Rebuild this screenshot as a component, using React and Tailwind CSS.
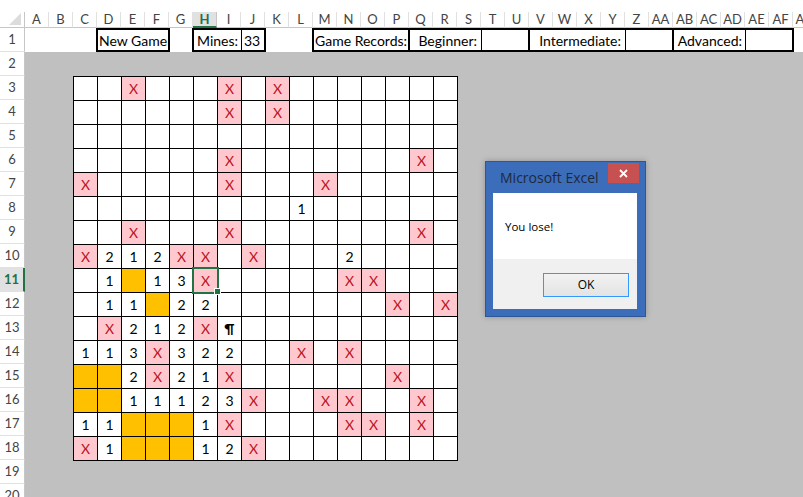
import React from 'react';

const cols = [
  'A', 'B', 'C', 'D', 'E', 'F', 'G', 'H', 'I', 'J', 'K', 'L', 'M', 'N', 'O', 'P',
  'Q', 'R', 'S', 'T', 'U', 'V', 'W', 'X', 'Y', 'Z', 'AA', 'AB', 'AC', 'AD', 'AE', 'AF', 'AG',
];

// '.' empty, X mine, Y revealed blank, P pilcrow, digits = counts
const board = [
  '..X...X.X.......',
  '......X.X.......',
  '................',
  '......X.......X.',
  'X.....X...X.....',
  '.........1......',
  '..X...X.......X.',
  'X212XX.X...2....',
  '.1Y13X.....XX...',
  '.11Y22.......X.X',
  '.X212XP.........',
  '113X322..X.X....',
  'YY2X21X......X..',
  'YY11123X..XX..X.',
  '11YYY1X....XX.X.',
  'X1YYY12X........',
];

function Cell({ v, selected }) {
  let bg = 'bg-white';
  if (v === 'X') bg = 'bg-[#ffc7ce]';
  if (v === 'Y') bg = 'bg-[#ffc000]';

  return (
    <div
      className={`${bg} ${selected ? 'z-10' : ''} relative w-[24px] h-[24px] border-r border-b border-black flex items-center justify-center`}
    >
      {v === 'X' && <span className="text-[#c0101c] text-[14px]">X</span>}
      {v === 'P' && <span className="font-bold text-[14px]">¶</span>}
      {/[0-9]/.test(v) && <span className="text-black text-[14px]">{v}</span>}
      {selected && (
        <>
          <div className="absolute -left-[2px] -top-[2px] w-[27px] h-[27px] border-2 border-[#217346]" />
          <div className="absolute left-[20px] top-[19px] w-[7px] h-[7px] bg-[#217346] border border-white" />
        </>
      )}
    </div>
  );
}

function App() {
  return (
    <div className="relative w-[803px] h-[497px] overflow-hidden bg-white font-['Lato',sans-serif] text-black">
      {/* column header */}
      <div className="h-[12px]" />
      <div className="flex h-[16px] overflow-hidden">
        <div className="w-[25px] shrink-0 border-r border-b border-[#c6c6c6] relative">
          <svg width="24" height="15" className="absolute left-0 top-0">
            <polygon points="21,1 21,13 9,13" fill="#dcdcdc" />
          </svg>
        </div>
        {cols.map((c) => (
          <div
            key={c}
            className={
              c === 'H'
                ? 'w-[24px] shrink-0 flex items-center justify-center leading-none bg-[#e1e1e1] text-[#217346] font-bold text-[13px] border-r border-r-[#c6c6c6] border-b-2 border-b-[#217346]'
                : 'w-[24px] shrink-0 flex items-center justify-center leading-none text-[#444] text-[13px] border-r border-r-[#e1e1e1] border-b border-b-[#c6c6c6]'
            }
          >
            {c}
          </div>
        ))}
      </div>

      <div className="flex">
        {/* row headers */}
        <div className="w-[25px] shrink-0 flex flex-col">
          {Array.from({ length: 20 }, (_, i) => i + 1).map((n) => (
            <div
              key={n}
              className={
                n === 11
                  ? 'h-[24px] shrink-0 flex items-center justify-center bg-[#e1e1e1] text-[#217346] font-bold text-[13px] border-b border-b-[#e1e1e1] border-r-2 border-r-[#217346]'
                  : 'h-[24px] shrink-0 flex items-center justify-center text-[#444] text-[13px] border-b border-b-[#e1e1e1] border-r border-r-[#c6c6c6]'
              }
            >
              {n}
            </div>
          ))}
        </div>

        <div className="flex-1 flex flex-col">
          {/* row 1 */}
          <div className="h-[24px] flex text-[14px] whitespace-nowrap">
            <div className="w-[71px] shrink-0" />
            <div className="w-[74px] shrink-0 border-2 border-black flex items-center pl-[1px]">
              New Game
            </div>
            <div className="w-[22px] shrink-0" />
            <div className="w-[74px] shrink-0 border-2 border-black flex">
              <div className="w-[48px] border-r border-black flex items-center pl-[3px]">Mines:</div>
              <div className="flex-1 flex items-center pl-[2px]">33</div>
            </div>
            <div className="w-[46px] shrink-0" />
            <div className="w-[482px] shrink-0 border-2 border-black flex">
              <div className="w-[96px] shrink-0 border-r-2 border-black flex items-center pl-[1px]">
                Game Records:
              </div>
              <div className="w-[72px] shrink-0 border-r border-black flex items-center justify-end pr-[4px]">
                Beginner:
              </div>
              <div className="w-[48px] shrink-0 border-r-2 border-black" />
              <div className="w-[96px] shrink-0 border-r border-black flex items-center justify-end pr-[4px]">
                Intermediate:
              </div>
              <div className="w-[48px] shrink-0 border-r-2 border-black" />
              <div className="w-[72px] shrink-0 border-r border-black flex items-center justify-end pr-[3px]">
                Advanced:
              </div>
              <div className="flex-1" />
            </div>
          </div>

          {/* sheet area */}
          <div className="flex-1 bg-[#c0c0c0] pl-[48px] pt-[24px] pb-[40px]">
            <div className="w-[385px] border-l border-t border-black grid grid-cols-16">
              {board.map((row, r) =>
                row.split('').map((v, c) => (
                  <Cell key={`${r}-${c}`} v={v} selected={r === 8 && c === 5} />
                )),
              )}
            </div>
          </div>
        </div>
      </div>

      {/* message box */}
      <div className="absolute left-[485px] top-[161px] w-[161px] h-[156px] bg-[#3c6dba] border border-[#2d5796] flex flex-col font-['Open_Sans',sans-serif] shadow-[0_0_6px_rgba(0,0,0,0.25)]">
        <div className="relative h-[31px] shrink-0 flex items-center pl-[14px] text-[14px] text-[#1e2a3a]">
          Microsoft Excel
          <div className="absolute left-[122px] top-[1px] w-[31px] h-[20px] bg-[#c75050] flex items-center justify-center">
            <svg width="9" height="9" viewBox="0 0 9 9">
              <path d="M1 1 L8 8 M8 1 L1 8" stroke="white" strokeWidth="1.8" />
            </svg>
          </div>
        </div>
        <div className="ml-[7px] w-[144px] h-[116px] flex flex-col">
          <div className="h-[66px] bg-white pl-[12px] pt-[25px] text-[11.5px] text-black">You lose!</div>
          <div className="flex-1 bg-[#f0f0f0] flex justify-end items-start pt-[14px] pr-[8px]">
            <div className="w-[86px] h-[24px] border border-[#3399ff] bg-linear-to-b from-[#f2f2f2] to-[#e3e3e3] flex items-center justify-center text-[12px] text-black">
              OK
            </div>
          </div>
        </div>
      </div>
    </div>
  );
}

export default App;
